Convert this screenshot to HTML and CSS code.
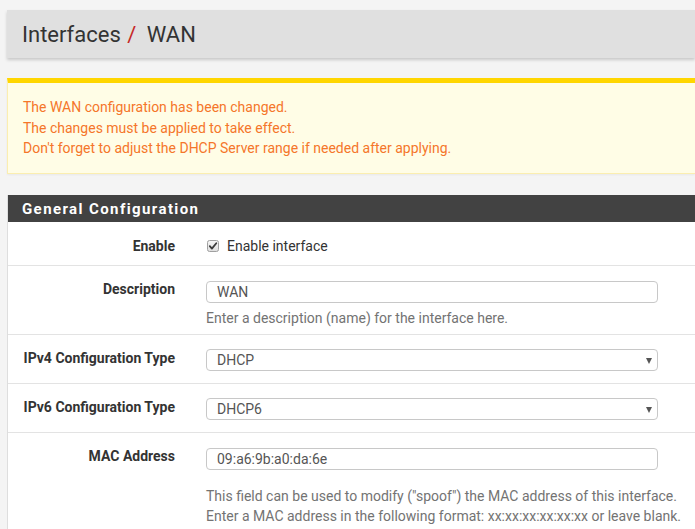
FILE: index.html
```html
<!DOCTYPE html>
<html lang="en">
<head>
<meta charset="utf-8">
<title>Interfaces / WAN</title>
<link rel="stylesheet" href="styles.css">
</head>
<body>
<div class="page">
  <div class="page-header">
    <h1 class="title">Interfaces <span class="sep">/</span> WAN</h1>
  </div>

  <div class="alert">
    <p>The WAN configuration has been changed.</p>
    <p>The changes must be applied to take effect.</p>
    <p>Don't forget to adjust the DHCP Server range if needed after applying.</p>
  </div>

  <div class="panel">
    <div class="panel-heading">General Configuration</div>
    <div class="panel-body">
      <div class="row row-enable">
        <div class="label label-enable">Enable</div>
        <div class="field">
          <label class="check">
            <svg class="checkbox" width="12" height="12" viewBox="0 0 12 12">
              <defs>
                <linearGradient id="cbg" x1="0" y1="0" x2="0" y2="1">
                  <stop offset="0" stop-color="#f6f6f6"/>
                  <stop offset="1" stop-color="#dedede"/>
                </linearGradient>
              </defs>
              <rect x="0.5" y="0.5" width="11" height="11" rx="2" fill="url(#cbg)" stroke="#a0a0a0"/>
              <path d="M2.8 6.2 L4.9 8.6 L9.3 3.2" fill="none" stroke="#3a3a3a" stroke-width="1.8" stroke-linecap="round" stroke-linejoin="round"/>
            </svg>
            <span>Enable interface</span>
          </label>
        </div>
      </div>

      <div class="row row-help">
        <div class="label">Description</div>
        <div class="field">
          <div class="input">WAN</div>
          <div class="help">Enter a description (name) for the interface here.</div>
        </div>
      </div>

      <div class="row">
        <div class="label label-select">IPv4 Configuration Type</div>
        <div class="field">
          <div class="input select">DHCP<span class="caret"></span></div>
        </div>
      </div>

      <div class="row">
        <div class="label label-select">IPv6 Configuration Type</div>
        <div class="field">
          <div class="input select">DHCP6<span class="caret"></span></div>
        </div>
      </div>

      <div class="row row-mac">
        <div class="label">MAC Address</div>
        <div class="field">
          <div class="input">09:a6:9b:a0:da:6e</div>
          <div class="help help-mac">This field can be used to modify ("spoof") the MAC address of this interface.<br>Enter a MAC address in the following format: xx:xx:xx:xx:xx:xx or leave blank.</div>
        </div>
      </div>
    </div>
  </div>
</div>
</body>
</html>
```

FILE: styles.css
```css
html, body {
  margin: 0;
  padding: 0;
  background: #f4f4f4;
  font-family: Roboto, "Noto Sans", "Liberation Sans", sans-serif;
  font-size: 14px;
  line-height: 20px;
  color: #333;
  overflow: hidden;
}

.page {
  padding: 10px 0 0 7px;
}

.page-header {
  background: #e0e0e0;
  height: 48px;
  box-shadow: 0 2px 3px rgba(0, 0, 0, 0.18);
  display: flex;
  align-items: center;
  padding-left: 15px;
}

.title {
  margin: 2px 0 0 0;
  font-size: 22px;
  font-weight: 400;
  line-height: 26px;
  color: #333;
}

.sep {
  color: #c62828;
  margin: 0 5px 0 1px;
}

.alert {
  margin-top: 20px;
  background: #fffde6;
  border-top: 5px solid #ffd600;
  border-left: 1px solid #fbeeb0;
  border-bottom: 1px solid #fbeeb0;
  padding: 14px 15px 14px 15px;
  color: #f5762a;
  box-shadow: 0 1px 2px rgba(0, 0, 0, 0.05);
}

.alert p {
  margin: 0;
  line-height: 20.5px;
}

.panel {
  margin-top: 21px;
  background: #fff;
  border-left: 1px solid #dedede;
}

.panel-heading {
  background: #424242;
  color: #fff;
  font-weight: 700;
  font-size: 15px;
  letter-spacing: 1.4px;
  height: 27px;
  line-height: 28px;
  padding-left: 14px;
}

.row {
  display: grid;
  grid-template-columns: 167px 1fr;
  column-gap: 31px;
  padding: 14px 0 12px 0;
  border-bottom: 1px solid #e3e3e3;
}

.row-enable {
  padding: 14px 0 9px 0;
}

.row-help {
  padding: 15px 0 6px 0;
}

.row-mac {
  padding: 15px 0 8px 0;
}

.label {
  text-align: right;
  font-weight: 700;
  color: #333;
  line-height: 20px;
  margin-top: -2px;
}

.label-enable {
  margin-top: 0;
}

.label-select {
  margin-top: -1px;
}

.check {
  display: flex;
  align-items: center;
  gap: 8px;
  padding-left: 1px;
}

.checkbox {
  display: block;
  flex: none;
}

.input {
  box-sizing: border-box;
  width: 452px;
  height: 22px;
  border: 1px solid #c8c8c8;
  border-radius: 4px;
  padding: 0 10px;
  line-height: 20px;
  color: #555;
  background: #fff;
  position: relative;
}

.select {
  line-height: 21px;
}

.caret {
  position: absolute;
  right: 5px;
  top: 8px;
  width: 0;
  height: 0;
  border-left: 3px solid transparent;
  border-right: 3px solid transparent;
  border-top: 6px solid #555;
}

.help {
  margin-top: 5px;
  color: #737373;
  line-height: 20px;
  white-space: nowrap;
}

.help-mac {
  margin-top: 16px;
}
```
